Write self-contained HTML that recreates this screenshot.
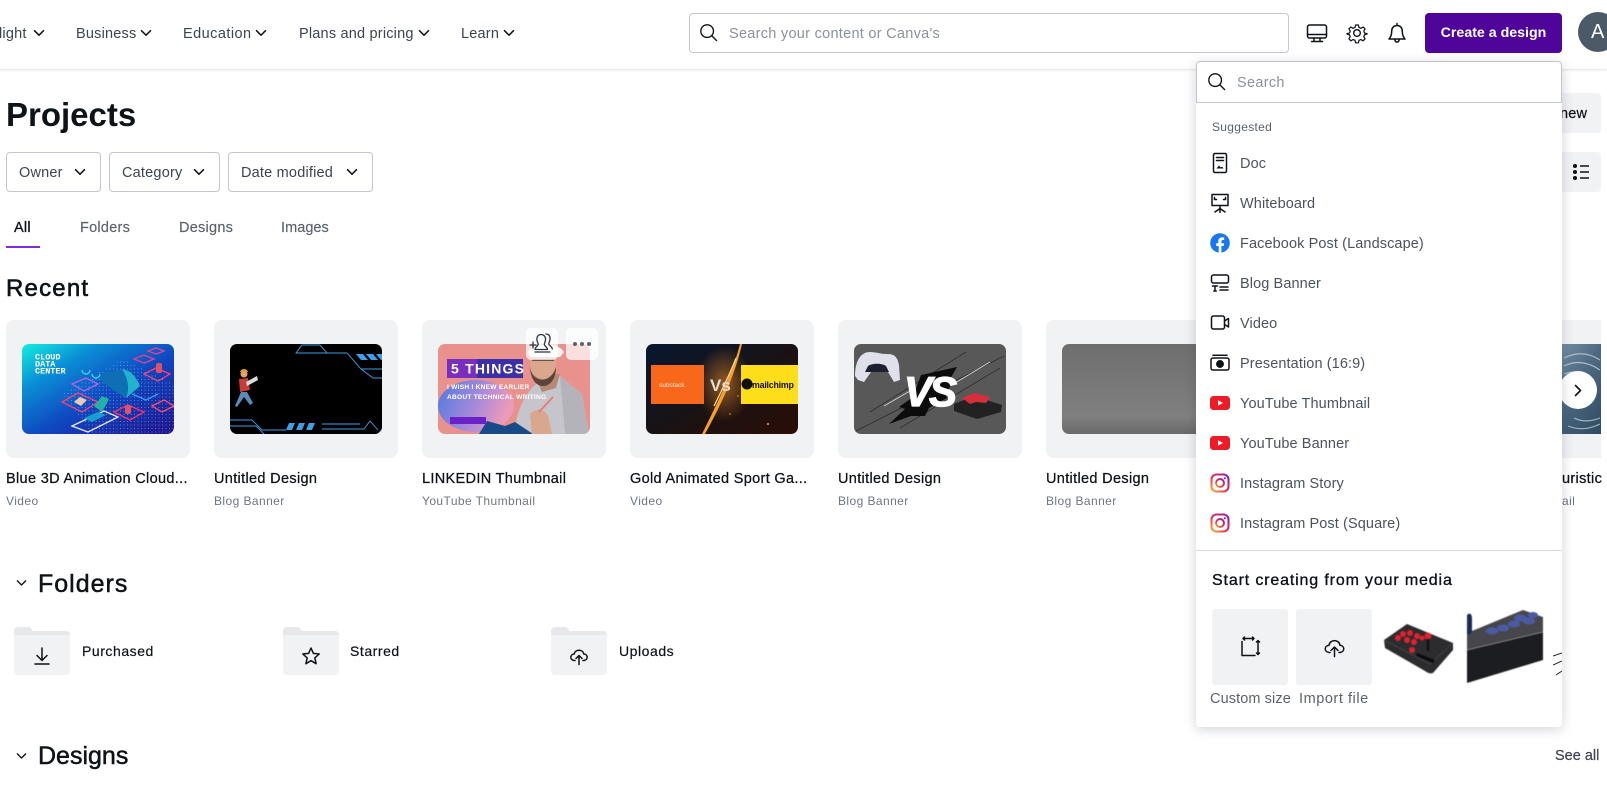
<!DOCTYPE html>
<html lang="en"><head><meta charset="utf-8"><title>Projects</title>
<style>
html,body{margin:0;padding:0;background:#fff}
body{position:relative;width:1607px;height:785px;overflow:hidden;font-family:"Liberation Sans",sans-serif;color:#0e1318}
.t{position:absolute;white-space:nowrap;line-height:20px;height:20px}
.nav{font-size:14.5px;color:#3c4450;letter-spacing:.2px}
.abs{position:absolute;display:block}
.ic{position:absolute;fill:none;stroke:#0e1318;stroke-width:1.5;stroke-linecap:round;stroke-linejoin:round}
.fb{position:absolute;top:152px;height:38px;border:1px solid #c3c7cd;border-radius:4px;background:#fff}
.card{position:absolute;top:320px;width:184px;height:138px;background:#f1f2f4;border-radius:8px;overflow:hidden}
.th{position:absolute;left:16px;top:24px;width:152px;height:90px;border-radius:7px;overflow:hidden;display:block;filter:blur(.3px)}
.ct{font-size:14.5px;font-weight:400;color:#0e1318;top:469px;letter-spacing:.33px;-webkit-text-stroke:.25px #0e1318}
.cs{font-size:12px;color:#6f7680;top:491px;letter-spacing:.42px}
.it{font-size:14.5px;color:#4b535e;left:1240px;letter-spacing:.1px}
.h2{font-size:25px;color:#0e1318;-webkit-text-stroke:.5px #0e1318}
.fl{font-size:14px;color:#0e1318;letter-spacing:.55px;-webkit-text-stroke:.2px #0e1318}
.tab{font-size:14.5px;color:#5a626c;top:218px;letter-spacing:.25px;-webkit-text-stroke:.15px #5a626c}
.tile{position:absolute;top:609px;width:76px;height:76px;background:#f1f2f4;border-radius:3px}
</style></head><body>
<svg width="0" height="0" style="position:absolute"><defs>
<symbol id="chev" viewBox="0 0 12 8"><path d="M1.500 1.700 6 6.200l4.500-4.500" fill="none" stroke="#0e1318" stroke-width="1.500" stroke-linecap="round" stroke-linejoin="round"/></symbol>
<symbol id="ig" viewBox="0 0 20 20"><defs><linearGradient id="igg" x1="0" y1="1" x2="1" y2="0"><stop offset="0" stop-color="#fdb13b"/><stop offset=".4" stop-color="#ea3a4c"/><stop offset=".75" stop-color="#c0207f"/><stop offset="1" stop-color="#6a2bc4"/></linearGradient></defs><rect x="1.500" y="1.500" width="17" height="17" rx="5" fill="none" stroke="url(#igg)" stroke-width="2.100"/><circle cx="10" cy="10" r="4" fill="none" stroke="url(#igg)" stroke-width="1.900"/><circle cx="14.800" cy="5.200" r="1.100" fill="#b0248f"/></symbol>
<symbol id="yt" viewBox="0 0 20 14"><rect width="20" height="14" rx="3.500" fill="#ed1c24"/><path d="M8 4.300 13 7l-5 2.700z" fill="#fff"/></symbol>
<symbol id="fold" viewBox="0 0 56 48"><path d="M0 4a4 4 0 0 1 4-4h10a4 4 0 0 1 4 4h34a4 4 0 0 1 4 4v36a4 4 0 0 1-4 4H4a4 4 0 0 1-4-4z" fill="#f1f2f4"/><path d="M0 8V4a4 4 0 0 1 4-4h10a4 4 0 0 1 4 4h34a4 4 0 0 1 4 4z" fill="#e6e8eb"/></symbol>
</defs></svg>

<!-- header -->
<div class="abs" style="left:0;top:0;width:1607px;height:69px;background:#fff;box-shadow:0 1px 2px rgba(30,40,60,.13)"></div>
<span class="t nav" style="left:-1px;top:24px">light</span><svg class="abs" style="left:33px;top:29px" width="12" height="8"><use href="#chev"/></svg>
<span class="t nav" style="left:76px;top:24px">Business</span><svg class="abs" style="left:140px;top:29px" width="12" height="8"><use href="#chev"/></svg>
<span class="t nav" style="left:183px;top:24px;letter-spacing:.45px">Education</span><svg class="abs" style="left:255px;top:29px" width="12" height="8"><use href="#chev"/></svg>
<span class="t nav" style="left:299px;top:24px">Plans and pricing</span><svg class="abs" style="left:418px;top:29px" width="12" height="8"><use href="#chev"/></svg>
<span class="t nav" style="left:461px;top:24px">Learn</span><svg class="abs" style="left:503px;top:29px" width="12" height="8"><use href="#chev"/></svg>

<div class="abs" style="left:689px;top:13px;width:598px;height:38px;border:1px solid #c3c7cd;border-radius:4px;background:#fff"></div>
<svg class="ic" style="left:699px;top:23px" width="19" height="19" viewBox="0 0 21 21"><circle cx="9" cy="9" r="7"/><path d="m14 14 5.500 5.500"/></svg>
<span class="t" style="left:729px;top:24px;font-size:14.5px;color:#8b929b;letter-spacing:.28px">Search your content or Canva's</span>

<svg class="ic" style="left:1306px;top:23px" width="22" height="20" viewBox="0 0 22 20"><rect x="1.500" y="2" width="19" height="13" rx="2"/><path d="M1.500 11.500h19M8 15v3M14 15v3M5.500 18.500h11"/></svg>
<svg class="ic" style="left:1346px;top:22px" width="22" height="22" viewBox="0 0 24 24"><circle cx="12" cy="12" r="3.600"/><path d="M10.300 2.300h3.400l.7 3 2.300 1 2.700-1.600 2.400 2.400-1.600 2.700 1 2.300 3 .7v.4l-3 .9-1 2.300 1.600 2.700-2.400 2.400-2.700-1.600-2.300 1-.7 3h-3.400l-.7-3-2.300-1-2.700 1.600-2.400-2.400 1.600-2.700-1-2.300-3-.9v-.4l3-.7 1-2.300-1.600-2.700 2.400-2.400 2.700 1.600 2.300-1z" transform="translate(1.200 1.200) scale(.9)"/></svg>
<svg class="ic" style="left:1386px;top:22px" width="22" height="22" viewBox="0 0 22 22"><path d="M11 3.500c-3.300 0-5.300 2.500-5.300 5.500 0 4.500-1.200 6.200-2.700 8h16c-1.500-1.800-2.700-3.500-2.700-8 0-3-2-5.500-5.300-5.500zM11 1.500v2M8.800 17.500c.2 1.700 1 2.500 2.200 2.500s2-.8 2.200-2.500"/></svg>
<div class="abs" style="left:1425px;top:13px;width:137px;height:40px;background:#4f0599;border-radius:4px"></div>
<span class="t" style="left:1425px;top:23px;width:137px;text-align:center;font-size:14.2px;font-weight:700;color:#fff">Create a design</span>
<div class="abs" style="left:1578px;top:12px;width:40px;height:40px;border-radius:50%;background:#4c5a68"></div>
<span class="t" style="left:1591px;top:22px;font-size:20px;color:#fff">A</span>

<!-- page head -->
<span class="t" style="left:6px;top:100px;height:30px;line-height:30px;font-size:33px;font-weight:700;color:#0e1318">Projects</span>
<div class="fb" style="left:6px;width:93px"></div><span class="t nav" style="left:19px;top:163px">Owner</span><svg class="abs" style="left:74px;top:168px" width="12" height="8"><use href="#chev"/></svg>
<div class="fb" style="left:109px;width:109px"></div><span class="t nav" style="left:122px;top:163px">Category</span><svg class="abs" style="left:193px;top:168px" width="12" height="8"><use href="#chev"/></svg>
<div class="fb" style="left:228px;width:143px"></div><span class="t nav" style="left:241px;top:163px">Date modified</span><svg class="abs" style="left:346px;top:168px" width="12" height="8"><use href="#chev"/></svg>

<span class="t tab" style="left:14px;color:#0e1318;-webkit-text-stroke:.3px #0e1318">All</span>
<span class="t tab" style="left:80px">Folders</span>
<span class="t tab" style="left:179px">Designs</span>
<span class="t tab" style="left:281px;letter-spacing:.05px">Images</span>
<div class="abs" style="left:6px;top:246px;width:34px;height:2px;background:#7d2ae8"></div>

<span class="t" style="left:6px;top:279px;height:20px;font-size:24px;letter-spacing:1.2px;color:#0e1318;-webkit-text-stroke:.6px #0e1318">Recent</span>

<!-- right buttons behind popup -->
<div class="abs" style="left:1540px;top:93px;width:61px;height:40px;background:#f1f2f4;border-radius:4px"></div>
<span class="t" style="left:1560px;top:104px;font-size:14.5px;color:#0e1318;letter-spacing:.2px;-webkit-text-stroke:.2px #0e1318">new</span>
<div class="abs" style="left:1540px;top:152px;width:61px;height:40px;background:#f1f2f4;border-radius:4px"></div>
<svg class="abs" style="left:1572px;top:163px" width="18" height="18" viewBox="0 0 18 18"><circle cx="3" cy="3" r="2" fill="#0e1318"/><circle cx="3" cy="9" r="2" fill="#0e1318"/><circle cx="3" cy="15" r="2" fill="#0e1318"/><path d="M8 3h9M8 9h9M8 15h9" stroke="#0e1318" stroke-width="1.500"/></svg>

<!-- cards -->
<div class="card" style="left:6px"><svg class="th" viewBox="0 0 152 90"><defs><linearGradient id="a1" x1="0" y1="0" x2="1" y2="1"><stop offset="0" stop-color="#14efdf"/><stop offset=".25" stop-color="#0a8fd6"/><stop offset=".55" stop-color="#0f48c0"/><stop offset="1" stop-color="#24108a"/></linearGradient><pattern id="dots" width="3.500" height="3.500" patternUnits="userSpaceOnUse"><rect width="1" height="1" fill="#6fd8ff" opacity=".55"/></pattern></defs><rect width="152" height="90" fill="url(#a1)"/><path d="M40 50L100 15l52 25v50H70z" fill="url(#dots)"/><text x="13" y="15.500" font-size="8.500" font-weight="700" fill="#fff" font-family="Liberation Mono,monospace">CLOUD</text><text x="13" y="22.500" font-size="8.500" font-weight="700" fill="#fff" font-family="Liberation Mono,monospace">DATA</text><text x="13" y="29.500" font-size="8.500" font-weight="700" fill="#fff" font-family="Liberation Mono,monospace">CENTER</text><path d="M78 36c0-6 8-10 12-8 6-5 18-3 22 6l6 8-14 12-10-6z" fill="#0f6fb4"/><path d="M100 25c8 1 14 7 18 17l-14 12c4-9 2-20-4-29z" fill="#2bd0d6" opacity=".7"/><g fill="none" stroke-width="1.300"><path d="M40 58l16-9 20 9-16 10z" stroke="#ff3e7b"/><path d="M50 82l32-15 14 6-30 15z" stroke="#e8e4ff"/><path d="M92 68l14-7 16 7-14 8z" stroke="#ff2d6d"/><path d="M122 30l12-6 14 6-12 7z" stroke="#ff3e7b"/><path d="M130 62l12-6 10 6-12 6z" stroke="#ff4b6a"/><path d="M50 40l14-6 12 6-14 7z" stroke="#c060e8"/><path d="M112 15l10-4 10 4-10 4zM126 7l8-3 8 3-8 3z" stroke="#e0409a"/><path d="M60 26a4 4 0 1 0 8 0M70 30a4 4 0 1 0 8 0" stroke="#36e0e0"/><path d="M110 50l14 6 12-6" stroke="#3a9cff"/></g><path d="M52 58l6-5 7 3-6 6z" fill="#f3c7b0"/><path d="M72 62l8-10 7 3-7 13z" fill="#1fb2a8"/><path d="M62 74l14-6 8 3-14 7z" fill="#16a0d0"/><rect x="103" y="61" width="6" height="9" rx="2" fill="#e0506a"/><rect x="134" y="19" width="6" height="10" rx="2" fill="#e0506a"/></svg></div>

<div class="card" style="left:214px"><svg class="th" viewBox="0 0 152 90"><rect width="152" height="90" fill="#000"/><g fill="none" stroke="#3d9fe6" stroke-width=".9"><path d="M66 9l6-8h18l7 8H66zM97 9h20l14 16h21M131 25l12 9h9"/><path d="M0 76h22l10 10 h24M0 82h26l8 8M92 80h38M92 85h42l6-8 8 9"/></g><path d="M126 10h7l5 6h-7zM136 10h7l5 6h-7zM146 10h6v6h-1z" fill="#3d9fe6"/><path d="M56 86l3-7h6l-3 7zM66 86l3-7h6l-3 7zM76 86l3-7h6l-3 7z" fill="#3d9fe6"/><path d="M147 90l5-5v5z" fill="#3d9fe6"/><circle cx="14" cy="30" r="3.500" fill="#e8a06a"/><path d="M10 28c1-4 7-4 8 0z" fill="#d8a030"/><path d="M9 35l9-1 2 12-10 2z" fill="#c93b38"/><path d="M16 38l11-6 1 4-11 6z" fill="#d8dce0"/><path d="M11 48l-6 14 2 1 7-10 6 8 3-2-6-11z" fill="#5a8bb8"/></svg></div>

<div class="card" style="left:422px"><svg class="th" viewBox="0 0 152 90"><defs><linearGradient id="a3" x1="0" y1="0" x2="1" y2=".3"><stop offset="0" stop-color="#4f78e0"/><stop offset=".6" stop-color="#a78bd8"/><stop offset="1" stop-color="#ec9aba"/></linearGradient></defs><rect width="152" height="90" fill="#e9918c"/><ellipse cx="38" cy="62" rx="38" ry="26" fill="url(#a3)"/><path d="M76 90c2-18 8-38 22-50l24-8 22 18 7 40z" fill="#c6c5cc"/><path d="M122 32l22 18 7 40h-24z" fill="#b4b3bb"/><path d="M96 30l26 0-4 14-14 4z" fill="#b58a74"/><ellipse cx="105" cy="20" rx="13" ry="15" fill="#d9a78e"/><path d="M92 22c1 16 20 20 26 1 0 11-5 19-13 19s-13-9-13-20z" fill="#5c4438"/><path d="M90 8c4-9 30-11 36 0l-4 5H92z" fill="#f4f2f1"/><path d="M94 16h8M108 16h8M102 16h6" stroke="#222" stroke-width="1.300"/><path d="M41 90l8-13 18 5 10-4 18 12z" fill="#184a88"/><path d="M92 70c6-6 14-6 18 2l4 18H94z" fill="#d9a78e"/><path d="M101 68l14-15" stroke="#e8796b" stroke-width="1.800"/><rect x="9" y="15" width="76" height="19" fill="#3d2fa6"/><rect x="9" y="15" width="30" height="19" fill="#7a2ec0"/><text x="13" y="29.500" font-size="14" font-weight="700" fill="#fff" letter-spacing="1.200">5 THINGS</text><text x="9" y="45" font-size="6.600" font-weight="700" fill="#fff" letter-spacing=".25">I WISH I KNEW EARLIER</text><text x="9" y="55" font-size="6.600" font-weight="700" fill="#fff" letter-spacing=".25">ABOUT TECHNICAL WRITING</text><rect x="12" y="73" width="36" height="7" fill="#6a22c8"/></svg></div>
<div class="abs" style="left:526px;top:328px;width:32px;height:32px;border-radius:5px;background:rgba(255,255,255,.72)"></div>
<svg class="abs" style="left:529px;top:331px" width="27" height="25" viewBox="0 0 27 25" fill="none" stroke="#2d3640" stroke-width="1.300" stroke-linecap="round" stroke-linejoin="round"><path d="M12 3.500c-3 0-4.500 2.500-4 5.500.2 2 1.200 3 1.200 4.500S6 16 6 18.500h12.500c0-2.500-3.200-3.500-3.200-5s1-2.500 1.200-4.500c.5-3-1.500-5.500-4.500-5.500z"/><path d="M17 3c3 0 4.500 2.500 4 5.500-.3 2-1.200 3-1.200 4.500s3.500 2.500 3.500 5"/><path d="M6 21h15M1 14h6M4 11v6"/></svg>
<div class="abs" style="left:566px;top:328px;width:32px;height:32px;border-radius:5px;background:rgba(255,255,255,.72)"></div>
<svg class="abs" style="left:572px;top:341px" width="20" height="6" viewBox="0 0 20 6" fill="#5c626b"><circle cx="3" cy="3" r="2"/><circle cx="10" cy="3" r="2"/><circle cx="17" cy="3" r="2"/></svg>

<div class="card" style="left:630px"><svg class="th" viewBox="0 0 152 90"><defs><linearGradient id="a4" x1="0" y1="0" x2="1" y2="1"><stop offset="0" stop-color="#071730"/><stop offset=".55" stop-color="#1a1213"/><stop offset="1" stop-color="#2a0d06"/></linearGradient><radialGradient id="g4"><stop offset="0" stop-color="#e88a2a" stop-opacity=".6"/><stop offset="1" stop-color="#e88a2a" stop-opacity="0"/></radialGradient></defs><rect width="152" height="90" fill="url(#a4)"/><ellipse cx="78" cy="40" rx="28" ry="38" fill="url(#g4)"/><path d="M94 0C88 24 76 50 56 90h3C80 52 90 26 96 0z" fill="#f3a02c"/><path d="M90 14C84 30 76 46 68 62" stroke="#ffe090" stroke-width="1.200" fill="none"/><g fill="#ff9a30"><circle cx="86" cy="30" r=".8"/><circle cx="92" cy="52" r=".8"/><circle cx="84" cy="70" r=".8"/><circle cx="122" cy="80" r="1"/></g><rect x="5" y="21" width="53" height="39" fill="#f9681a"/><text x="13" y="43" font-size="6.500" fill="#ffe8d8">substack</text><rect x="95" y="21" width="57" height="39" fill="#fedd1b"/><circle cx="101" cy="40" r="5.500" fill="#111"/><text x="106" y="44" font-size="8.800" font-weight="700" fill="#111" letter-spacing="-.2">mailchimp</text><text x="64" y="47" font-size="17" font-weight="700" fill="#e4dfd6">Vs</text></svg></div>

<div class="card" style="left:838px"><svg class="th" viewBox="0 0 152 90"><rect width="152" height="90" fill="#585858"/><g stroke="#222" stroke-width=".7" fill="none"><path d="M16 68L112 8M0 88L150 12M46 84l100-60"/></g><g stroke="#ddd" stroke-width=".8"><path d="M30 62l26-15M96 42l40-24"/></g><path d="M35 80l16-15-6-2 14-10 8-22 36-8-8 14 6-1-10 14 2 4-18 10-4 8-14 0z" fill="#0c0c0c"/><text x="50" y="62" font-size="42" font-weight="700" font-style="italic" fill="#fff" stroke="#fff" stroke-width="1.200" letter-spacing="-3">VS</text><path d="M1 32c0-12 4-24 15-24 6 0 11 2 16 2 7 0 11 1 13 11l1 15-6 2-6-10c-4-2-12-2-17 0l-7 10-6-2z" fill="#e0e0ea"/><path d="M14 22c4-3 14-3 18 0l3 6H11z" fill="#1c2030"/><path d="M100 60l20-8 28 9-1 7-24 7-23-8z" fill="#222"/><path d="M108 54l12-5 16 4-4 6-10-1-6 2z" fill="#d72e3d"/></svg></div>

<div class="card" style="left:1046px"><svg class="th" viewBox="0 0 152 90"><defs><linearGradient id="a6" x1="0" y1="0" x2="0" y2="1"><stop offset="0" stop-color="#6e6e6e"/><stop offset=".45" stop-color="#787878"/><stop offset=".8" stop-color="#808080"/><stop offset="1" stop-color="#6a6a6a"/></linearGradient></defs><rect width="152" height="90" fill="url(#a6)"/></svg></div>

<div class="abs" style="left:1254px;top:320px;width:347px;height:138px;background:#f1f2f4"></div>
<svg class="abs" style="left:1540px;top:344px" width="61" height="90" viewBox="0 0 61 90"><defs><linearGradient id="a8" x1="0" y1="0" x2="1" y2="1"><stop offset="0" stop-color="#8aa2b3"/><stop offset=".5" stop-color="#4e6b83"/><stop offset="1" stop-color="#2e4a62"/></linearGradient></defs><rect width="61" height="90" fill="url(#a8)"/><g fill="none" stroke="#c8d6de" stroke-width="1.200" opacity=".75"><path d="M24 14c12-6 24-6 36 2M24 22c12-6 24-4 36 4M24 30c10-4 20-2 30 6M34 74c8 4 16 4 26 0M28 82c10 4 20 4 32-2"/></g></svg>
<div class="abs" style="left:1559px;top:371px;width:38px;height:38px;border-radius:50%;background:#fff"></div>
<svg class="abs" style="left:1573px;top:384px" width="10" height="13" viewBox="0 0 10 13"><path d="M2.500 1.500l5 5-5 5" fill="none" stroke="#0e1318" stroke-width="1.600" stroke-linecap="round" stroke-linejoin="round"/></svg>

<span class="t ct" style="left:6px">Blue 3D Animation Cloud...</span><span class="t cs" style="left:6px">Video</span>
<span class="t ct" style="left:214px">Untitled Design</span><span class="t cs" style="left:214px">Blog Banner</span>
<span class="t ct" style="left:422px">LINKEDIN Thumbnail</span><span class="t cs" style="left:422px">YouTube Thumbnail</span>
<span class="t ct" style="left:630px">Gold Animated Sport Ga...</span><span class="t cs" style="left:630px">Video</span>
<span class="t ct" style="left:838px">Untitled Design</span><span class="t cs" style="left:838px">Blog Banner</span>
<span class="t ct" style="left:1046px">Untitled Design</span><span class="t cs" style="left:1046px">Blog Banner</span>
<span class="t ct" style="left:1562px">uristic</span><span class="t cs" style="left:1562px">ail</span>

<!-- folders -->
<svg class="abs" style="left:16px;top:579px" width="11" height="8"><use href="#chev"/></svg>
<span class="t h2" style="left:38px;top:574px;letter-spacing:1px">Folders</span>
<svg class="abs" style="left:14px;top:627px" width="56" height="48"><use href="#fold"/></svg>
<svg class="ic" style="left:33px;top:646px" width="18" height="20" viewBox="0 0 18 20" stroke-width="1.200"><path d="M9 2v12M4 9.500 9 14.500l5-5M2 18h14"/></svg>
<span class="t fl" style="left:82px;top:641px">Purchased</span>
<svg class="abs" style="left:283px;top:627px" width="56" height="48"><use href="#fold"/></svg>
<svg class="ic" style="left:301px;top:646px" width="20" height="20" viewBox="0 0 20 20" stroke-width="1.200"><path d="M10 2l2.400 5.400 5.800.6-4.400 3.900 1.300 5.800-5.100-3-5.100 3 1.300-5.800L1.800 8l5.800-.6z"/></svg>
<span class="t fl" style="left:350px;top:641px">Starred</span>
<svg class="abs" style="left:551px;top:627px" width="56" height="48"><use href="#fold"/></svg>
<svg class="ic" style="left:569px;top:646px" width="20" height="20" viewBox="0 0 20 20" stroke-width="1.200"><path d="M6 14.500H5c-5-1-3.500-6.500.2-6.500C6 3 14 3 14.800 8c3.700 0 5.200 5.500.2 6.500h-1M10 18.500V10M7 12.500l3-3 3 3"/></svg>
<span class="t fl" style="left:619px;top:641px">Uploads</span>

<svg class="abs" style="left:16px;top:752px" width="11" height="8"><use href="#chev"/></svg>
<span class="t h2" style="left:38px;top:746px">Designs</span>
<span class="t" style="left:1555px;top:746px;font-size:14.5px;color:#3c4450;-webkit-text-stroke:.2px #3c4450">See all</span>

<!-- popup -->
<div class="abs" style="left:1196px;top:62px;width:366px;height:665px;background:#fff;border-radius:4px;box-shadow:0 2px 12px rgba(40,50,70,.22)"></div>
<div class="abs" style="left:1196px;top:61px;width:364px;height:40px;border:1px solid #c3c7cd;border-radius:4px 4px 0 0;background:#fff"></div>
<svg class="ic" style="left:1207px;top:72px" width="19" height="19" viewBox="0 0 21 21"><circle cx="9" cy="9" r="7"/><path d="m14 14 5.500 5.500"/></svg>
<span class="t" style="left:1237px;top:73px;font-size:14.5px;color:#8b929b;letter-spacing:.3px">Search</span>
<span class="t" style="left:1212px;top:117px;font-size:12px;color:#5a626c;letter-spacing:.3px">Suggested</span>

<svg class="ic" style="left:1212px;top:152px" width="16" height="22" viewBox="0 0 16 22" stroke-width="1.400"><rect x="1.500" y="1.500" width="13" height="19" rx="1.500"/><path d="M4.500 5.500h7M4.500 8.500h7"/><path d="M4.500 16.500l2.500-3 1.800 2 1.200-1 1.500 2z" fill="#0e1318" stroke="none"/></svg>
<span class="t it" style="top:154px">Doc</span>
<svg class="ic" style="left:1210px;top:193px" width="20" height="20" viewBox="0 0 20 20" stroke-width="1.400"><rect x="2" y="1.500" width="16" height="11"/><path d="M4.500 4.500v2h2M15.500 4.500v2h-2M10 12.500V16M5 19 10 15.500l5 3.500M10 16v3.500"/></svg>
<span class="t it" style="top:194px">Whiteboard</span>
<svg class="abs" style="left:1210px;top:233px" width="20" height="20" viewBox="0 0 20 20"><circle cx="10" cy="10" r="9.800" fill="#1877f2"/><path d="M11.400 20v-7h2.300l.4-2.800h-2.700V8.500c0-.8.400-1.500 1.600-1.500h1.200V4.600s-1.100-.2-2.200-.2c-2.200 0-3.700 1.400-3.700 3.800v2H6.200V13h2.500v7z" fill="#fff"/></svg>
<span class="t it" style="top:234px">Facebook Post (Landscape)</span>
<svg class="ic" style="left:1210px;top:274px" width="20" height="18" viewBox="0 0 20 18" stroke-width="1.400"><rect x="1.500" y="1" width="17" height="8" rx="2"/><path d="M2.500 12h5M5 12v5M3.800 17h2.500M10 13h8M10 16h8"/></svg>
<span class="t it" style="top:274px">Blog Banner</span>
<svg class="ic" style="left:1210px;top:314px" width="20" height="18" viewBox="0 0 20 18" stroke-width="1.400"><rect x="1.500" y="2" width="13" height="13" rx="2"/><path d="M14.500 7l4-2.500v8.500l-4-2.500"/></svg>
<span class="t it" style="top:314px">Video</span>
<svg class="ic" style="left:1210px;top:354px" width="20" height="18" viewBox="0 0 20 18" stroke-width="1.400"><rect x="1" y="4" width="18" height="12" rx="2"/><path d="M3 1.200h14"/><circle cx="10" cy="10" r="3.200" fill="#0e1318"/></svg>
<span class="t it" style="top:354px">Presentation (16:9)</span>
<svg class="abs" style="left:1210px;top:396px" width="20" height="14"><use href="#yt"/></svg>
<span class="t it" style="top:394px">YouTube Thumbnail</span>
<svg class="abs" style="left:1210px;top:436px" width="20" height="14"><use href="#yt"/></svg>
<span class="t it" style="top:434px">YouTube Banner</span>
<svg class="abs" style="left:1210px;top:473px" width="20" height="20"><use href="#ig"/></svg>
<span class="t it" style="top:474px">Instagram Story</span>
<svg class="abs" style="left:1210px;top:513px" width="20" height="20"><use href="#ig"/></svg>
<span class="t it" style="top:514px">Instagram Post (Square)</span>

<div class="abs" style="left:1196px;top:550px;width:366px;height:1px;background:#d5d8dc"></div>
<span class="t" style="left:1212px;top:571px;font-size:16px;color:#0e1318;letter-spacing:.85px;-webkit-text-stroke:.35px #0e1318">Start creating from your media</span>
<div class="tile" style="left:1212px"></div>
<svg class="ic" style="left:1239px;top:636px" width="22" height="22" viewBox="0 0 22 22" stroke-width="1.400"><path d="M3 5.500v14h13M4 2.500h11M4 2.500l1.500-1.500M4 2.500 5.500 4M15 2.500 13.500 1M15 2.500 13.500 4M19 4.500v14M19 4.500l-1.500 1.500M19 4.500l1.500 1.500M19 18.500 17.500 17M19 18.500l1.500-1.500"/></svg>
<span class="t" style="left:1210px;top:689px;font-size:14.5px;color:#5a626c;letter-spacing:.1px">Custom size</span>
<div class="tile" style="left:1296px"></div>
<svg class="ic" style="left:1323px;top:637px" width="23" height="21" viewBox="0 0 23 21" stroke-width="1.400"><path d="M7 15.500H6c-5.500-.8-4.500-7 0-7.200C7 2 16 2 17 8.300c4.500.2 5.500 6.400 0 7.200h-1M11.500 19.500V10.500M8 13.500l3.500-3.500 3.500 3.500"/></svg>
<span class="t" style="left:1299px;top:689px;font-size:14.5px;color:#5a626c;letter-spacing:.55px">Import file</span>

<svg class="abs" style="left:1384px;top:622px;filter:blur(.4px)" width="72" height="56" viewBox="0 0 72 56"><path d="M0 18L23 2l46 19v7L49 51c-3 1-5 0-8-2L1 26z" fill="#2c2c2e"/><path d="M0 18l46 24 23-21" fill="none" stroke="#4a4a4c" stroke-width=".8"/><g fill="#e0222f"><circle cx="19" cy="12" r="3"/><circle cx="26" cy="11" r="3"/><circle cx="33" cy="14" r="3"/><circle cx="14" cy="16" r="3"/><circle cx="23" cy="18" r="3"/><circle cx="30" cy="20" r="3"/><circle cx="38" cy="16" r="2.500"/><circle cx="28" cy="28" r="3"/><circle cx="44" cy="14" r="3.500"/></g><path d="M44 17v12" stroke="#111" stroke-width="2.500"/><path d="M33 31l18 7-2 3-17-7z" fill="#0c0c0c"/></svg>
<svg class="abs" style="left:1467px;top:610px;filter:blur(.4px)" width="76" height="74" viewBox="0 0 76 74"><path d="M0 23L56 0l20 7v15L0 40z" fill="#47474b"/><path d="M0 40l76-18v28L0 73z" fill="#1c1d20"/><path d="M0 40l76-18" stroke="#9a9b9e" stroke-width=".7"/><path d="M0 5c3-3 5-1 5 4v14l-5 2z" fill="#1b2b55"/><g fill="#4b5aa5"><ellipse cx="25" cy="21" rx="6" ry="3.500"/><ellipse cx="36" cy="18" rx="6" ry="3.500"/><ellipse cx="47" cy="14" rx="6" ry="3.500"/><ellipse cx="53" cy="8" rx="6" ry="3.500"/><ellipse cx="62" cy="11" rx="6" ry="3.500"/><ellipse cx="66" cy="5" rx="5" ry="3"/></g></svg>
<svg class="abs" style="left:1553px;top:648px" width="9" height="32" viewBox="0 0 9 32"><path d="M0 8l9-3M0 17l9-4M3 27l6-4" stroke="#222" stroke-width="1"/></svg>
</body></html>
